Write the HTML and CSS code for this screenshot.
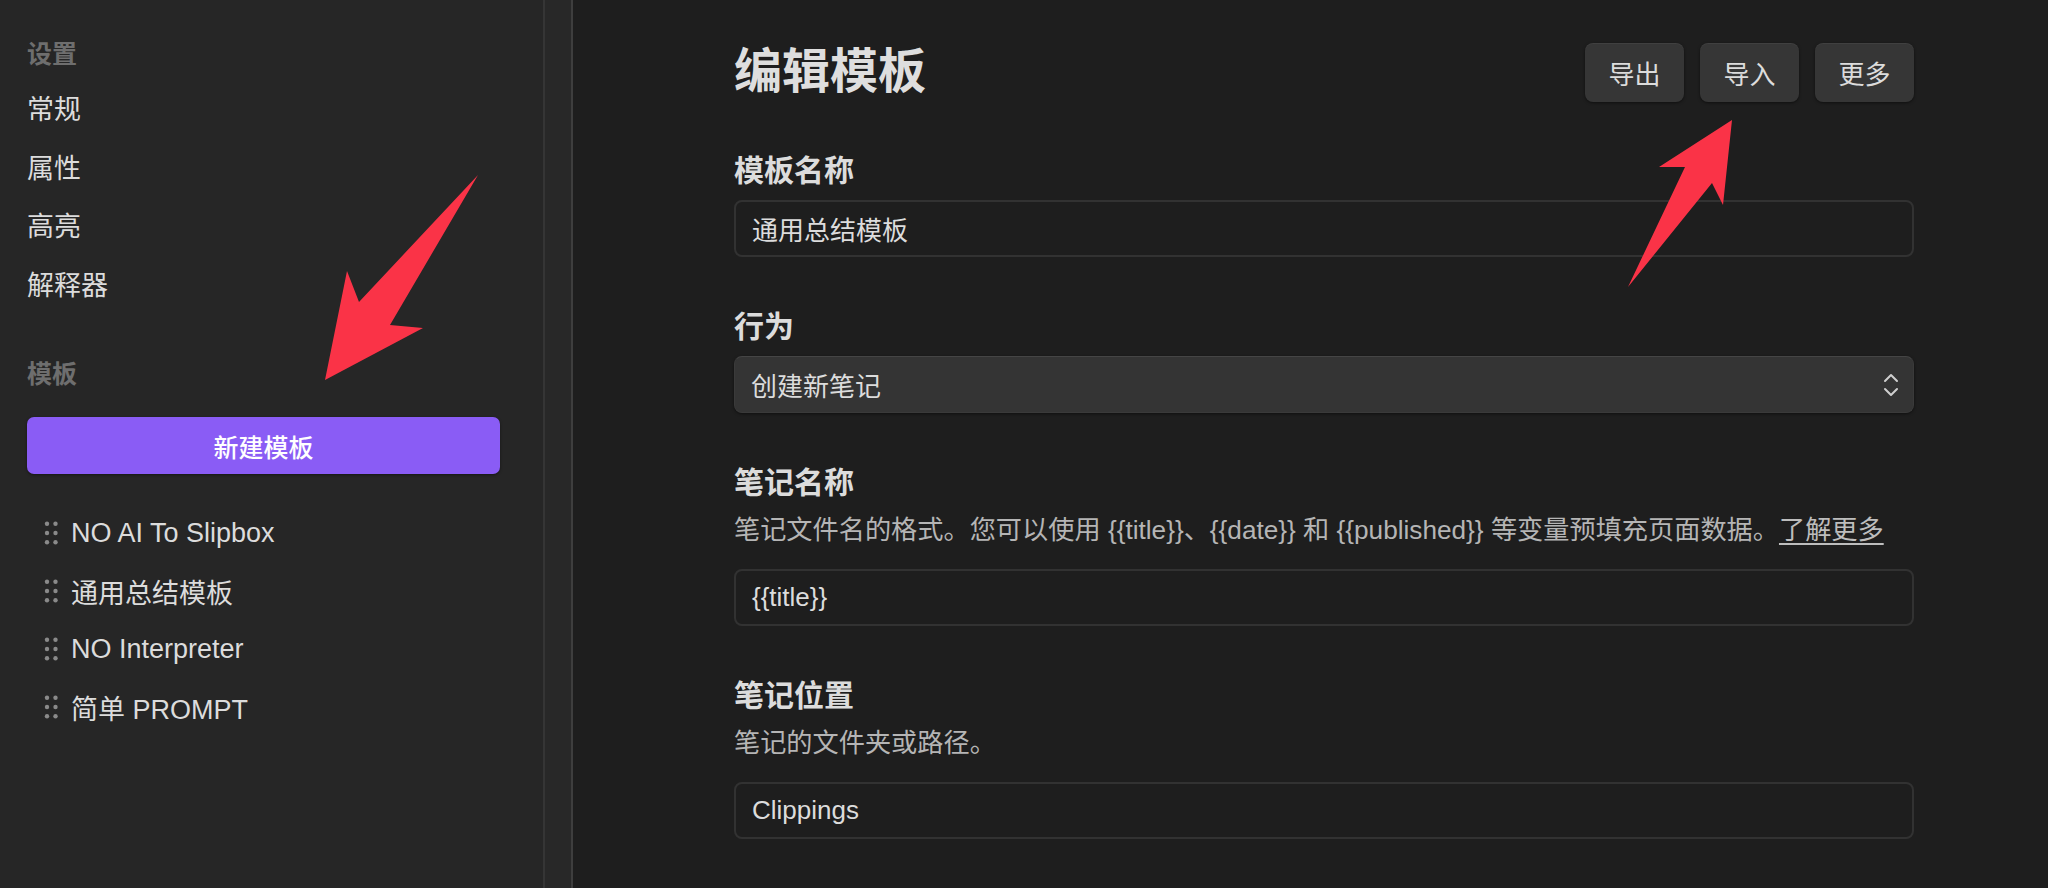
FILE: index.html
```html
<!DOCTYPE html>
<html lang="zh-CN">
<head>
<meta charset="utf-8">
<title>编辑模板</title>
<link rel="stylesheet" href="styles.css">
</head>
<body>
<div class="app">
  <aside class="sidebar">
    <div class="sb-head">设置</div>
    <div class="sb-item">常规</div>
    <div class="sb-item">属性</div>
    <div class="sb-item">高亮</div>
    <div class="sb-item">解释器</div>
    <div class="sb-head sb-head-tpl">模板</div>
    <button class="new-btn">新建模板</button>
    <ul class="tpl-list">
      <li class="tpl"><svg class="grip" viewBox="0 0 15 24" width="15" height="24"><circle cx="3" cy="2.8" r="2.2"/><circle cx="11.5" cy="2.8" r="2.2"/><circle cx="3" cy="12" r="2.2"/><circle cx="11.5" cy="12" r="2.2"/><circle cx="3" cy="21.2" r="2.2"/><circle cx="11.5" cy="21.2" r="2.2"/></svg><span>NO AI To Slipbox</span></li>
      <li class="tpl"><svg class="grip" viewBox="0 0 15 24" width="15" height="24"><circle cx="3" cy="2.8" r="2.2"/><circle cx="11.5" cy="2.8" r="2.2"/><circle cx="3" cy="12" r="2.2"/><circle cx="11.5" cy="12" r="2.2"/><circle cx="3" cy="21.2" r="2.2"/><circle cx="11.5" cy="21.2" r="2.2"/></svg><span>通用总结模板</span></li>
      <li class="tpl"><svg class="grip" viewBox="0 0 15 24" width="15" height="24"><circle cx="3" cy="2.8" r="2.2"/><circle cx="11.5" cy="2.8" r="2.2"/><circle cx="3" cy="12" r="2.2"/><circle cx="11.5" cy="12" r="2.2"/><circle cx="3" cy="21.2" r="2.2"/><circle cx="11.5" cy="21.2" r="2.2"/></svg><span>NO Interpreter</span></li>
      <li class="tpl"><svg class="grip" viewBox="0 0 15 24" width="15" height="24"><circle cx="3" cy="2.8" r="2.2"/><circle cx="11.5" cy="2.8" r="2.2"/><circle cx="3" cy="12" r="2.2"/><circle cx="11.5" cy="12" r="2.2"/><circle cx="3" cy="21.2" r="2.2"/><circle cx="11.5" cy="21.2" r="2.2"/></svg><span>简单 PROMPT</span></li>
    </ul>
  </aside>
  <div class="gutter"></div>
  <main class="content">
    <div class="header">
      <h1 class="title">编辑模板</h1>
      <div class="actions">
        <button class="btn">导出</button>
        <button class="btn">导入</button>
        <button class="btn">更多</button>
      </div>
    </div>
    <section class="field">
      <div class="label">模板名称</div>
      <div class="input">通用总结模板</div>
    </section>
    <section class="field">
      <div class="label">行为</div>
      <div class="select">
        <span>创建新笔记</span>
        <svg class="chev" viewBox="0 0 16 26" width="16" height="26"><path d="M2 9 L8 3 L14 9 M2 17 L8 23 L14 17"/></svg>
      </div>
    </section>
    <section class="field">
      <div class="label">笔记名称</div>
      <div class="desc">笔记文件名的格式。您可以使用 {{title}}、{{date}} 和 {{published}} 等变量预填充页面数据。<a class="link" href="#">了解更多</a></div>
      <div class="input">{{title}}</div>
    </section>
    <section class="field">
      <div class="label">笔记位置</div>
      <div class="desc">笔记的文件夹或路径。</div>
      <div class="input">Clippings</div>
    </section>
  </main>
</div>
<svg class="annot" viewBox="0 0 2048 888" width="2048" height="888">
  <polygon points="478,175 390,325 423,328 325,380 347,271 359,302"/>
  <polygon points="1732,120 1723,205 1712,183 1628,287 1685,167 1659,167"/>
</svg>
</body>
</html>
```

FILE: styles.css
```css
* {
  box-sizing: border-box;
}

html, body {
  margin: 0;
  padding: 0;
}

body {
  width: 2048px;
  height: 888px;
  overflow: hidden;
  background: #1e1e1e;
  color: #dadada;
  font-family: "Liberation Sans", "Noto Sans CJK SC", sans-serif;
  position: relative;
}

.app {
  display: flex;
  height: 888px;
}

/* Sidebar */
.sidebar {
  width: 543px;
  flex: none;
  background: #262626;
  padding: 37px 43px 0 27px;
}

.sb-head {
  font-size: 25px;
  line-height: 34px;
  font-weight: 700;
  color: #6e6e6e;
  margin-bottom: 10px;
}

.sb-head-tpl {
  margin-top: 42px;
  margin-bottom: 26px;
}

.sb-item {
  font-size: 27px;
  line-height: 58.5px;
  height: 58.5px;
  color: #dcdcdc;
}

.new-btn {
  display: block;
  width: 100%;
  height: 57px;
  border: none;
  border-radius: 7px;
  background: #8a5cf5;
  color: #ffffff;
  font-family: inherit;
  font-size: 25px;
  font-weight: 500;
  box-shadow: 0 1px 3px rgba(0, 0, 0, 0.45);
}

.tpl-list {
  list-style: none;
  margin: 30px 0 0;
  padding: 0;
}

.tpl {
  display: flex;
  align-items: center;
  height: 58px;
  padding-left: 17px;
  font-size: 27px;
  color: #dcdcdc;
}

.grip {
  flex: none;
  fill: #8a8a8a;
  margin-right: 12px;
}

/* Gutter between panes */
.gutter {
  width: 30px;
  flex: none;
  background: #282828;
  border-left: 2px solid #353535;
  border-right: 2px solid #3e3e3e;
}

/* Main */
.content {
  flex: 1;
  padding: 45px 134px 0 161px;
}

.header {
  display: flex;
  justify-content: space-between;
  align-items: flex-start;
  margin-bottom: 51px;
}

.title {
  margin: 0;
  font-size: 48px;
  line-height: 54px;
  font-weight: 700;
  color: #dedede;
}

.actions {
  display: flex;
  gap: 16px;
  margin-top: -2px;
}

.btn {
  width: 99px;
  height: 59px;
  border: none;
  border-radius: 8px;
  background: #363636;
  color: #dcdcdc;
  font-family: inherit;
  font-size: 26px;
  box-shadow: inset 0 1px 0 rgba(255, 255, 255, 0.05), 0 1px 3px rgba(0, 0, 0, 0.5);
}

.field + .field {
  margin-top: 52px;
}

.label {
  font-size: 30px;
  line-height: 36px;
  font-weight: 700;
  color: #dcdcdc;
  margin-bottom: 11px;
}

.desc {
  font-size: 26.2px;
  line-height: 36px;
  color: #b5b5b5;
  margin-bottom: 21px;
  white-space: nowrap;
}

.link {
  color: #bdbdbd;
  text-decoration: underline;
  text-underline-offset: 4px;
}

.input {
  height: 57px;
  border: 2px solid #323232;
  border-radius: 8px;
  background: #1e1e1e;
  padding: 0 16px;
  display: flex;
  align-items: center;
  font-size: 26px;
  color: #dcdcdc;
}

.select {
  height: 57px;
  border-radius: 8px;
  background: #343434;
  border: 1px solid #3a3a3a;
  border-top-color: #454545;
  box-shadow: 0 1px 3px rgba(0, 0, 0, 0.5);
  padding: 0 14px 0 16px;
  display: flex;
  align-items: center;
  justify-content: space-between;
  font-size: 26px;
  color: #dcdcdc;
}

.chev {
  fill: none;
  stroke: #cfcfcf;
  stroke-width: 2;
  stroke-linecap: round;
  stroke-linejoin: round;
}

/* Annotation overlay */
.annot {
  position: absolute;
  left: 0;
  top: 0;
  pointer-events: none;
  fill: #fa3347;
}
```
